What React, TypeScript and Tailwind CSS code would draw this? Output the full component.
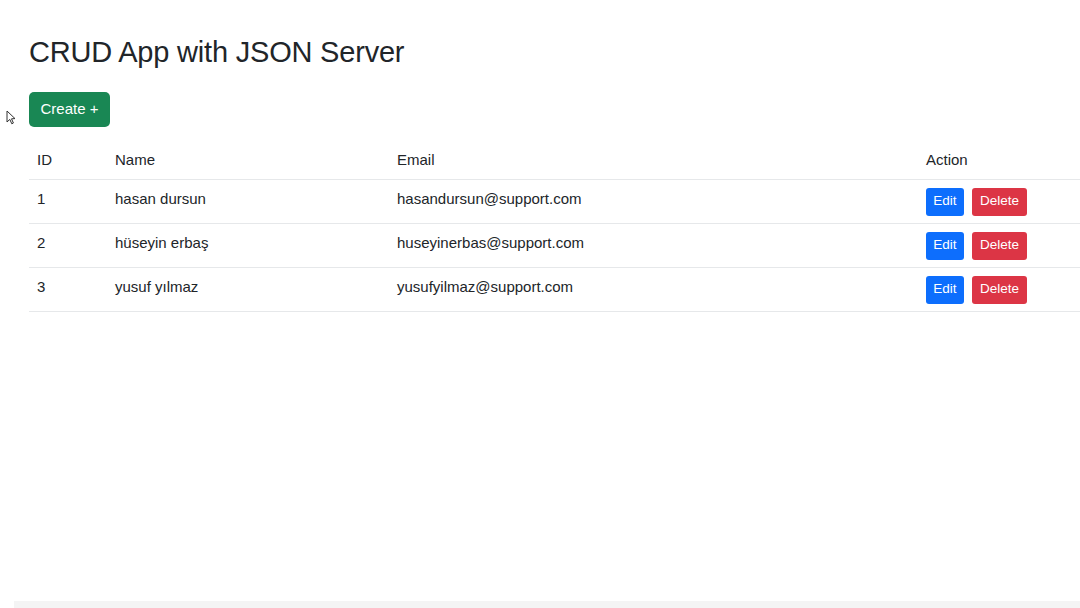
import React from "react";

type User = {
  id: number;
  name: string;
  email: string;
};

const users: User[] = [
  { id: 1, name: "hasan dursun", email: "hasandursun@support.com" },
  { id: 2, name: "hüseyin erbaş", email: "huseyinerbas@support.com" },
  { id: 3, name: "yusuf yılmaz", email: "yusufyilmaz@support.com" },
];

const cols = "grid grid-cols-[78px_282px_529px_1fr]";

export default function App() {
  return (
    <div
      className="relative flex h-[608px] w-[1080px] flex-col overflow-hidden bg-white text-[#212529]"
      style={{ fontFamily: '"Liberation Sans", Arial, sans-serif' }}
    >
      {/* mouse cursor */}
      <svg
        className="absolute left-[6px] top-[110px]"
        width="10"
        height="15"
        viewBox="0 0 10 15"
      >
        <path
          d="M1 1 L1 12 L3.8 9.4 L5.8 13.8 L7.4 13 L5.5 8.8 L9 8.6 Z"
          fill="#fff"
          stroke="#333"
          strokeWidth="1"
          strokeLinejoin="round"
        />
      </svg>

      <main className="flex-1 pl-[29px] pt-[35px]">
        <h1 className="text-[29px] leading-[34px] font-normal tracking-[-0.2px]">
          CRUD App with JSON Server
        </h1>

        <button className="mt-[23px] h-[35px] w-[81px] rounded-[5px] bg-[#198754] text-[15px] text-white">
          Create +
        </button>

        {/* Table */}
        <div className="mt-[13px] text-[15px]">
          <div className={`${cols} h-[40px] items-center border-b border-[#e6e8ea] pt-[2px] font-medium`}>
            <div className="px-2">ID</div>
            <div className="px-2">Name</div>
            <div className="px-2">Email</div>
            <div className="px-2">Action</div>
          </div>

          {users.map((u) => (
            <div
              key={u.id}
              className={`${cols} h-[44px] items-center border-b border-[#e6e8ea]`}
            >
              <div className="px-2 pb-[5px]">{u.id}</div>
              <div className="px-2 pb-[5px]">{u.name}</div>
              <div className="px-2 pb-[5px]">{u.email}</div>
              <div className="flex gap-2 px-2">
                <button className="h-[28px] w-[38px] rounded-[3px] bg-[#0d6efd] text-[13.5px] text-white">
                  Edit
                </button>
                <button className="h-[28px] w-[55px] rounded-[3px] bg-[#dc3545] text-[13.5px] text-white">
                  Delete
                </button>
              </div>
            </div>
          ))}
        </div>
      </main>

      {/* horizontal scrollbar track */}
      <div className="ml-[14px] h-[7px] bg-[#f4f4f4]" />
    </div>
  );
}
